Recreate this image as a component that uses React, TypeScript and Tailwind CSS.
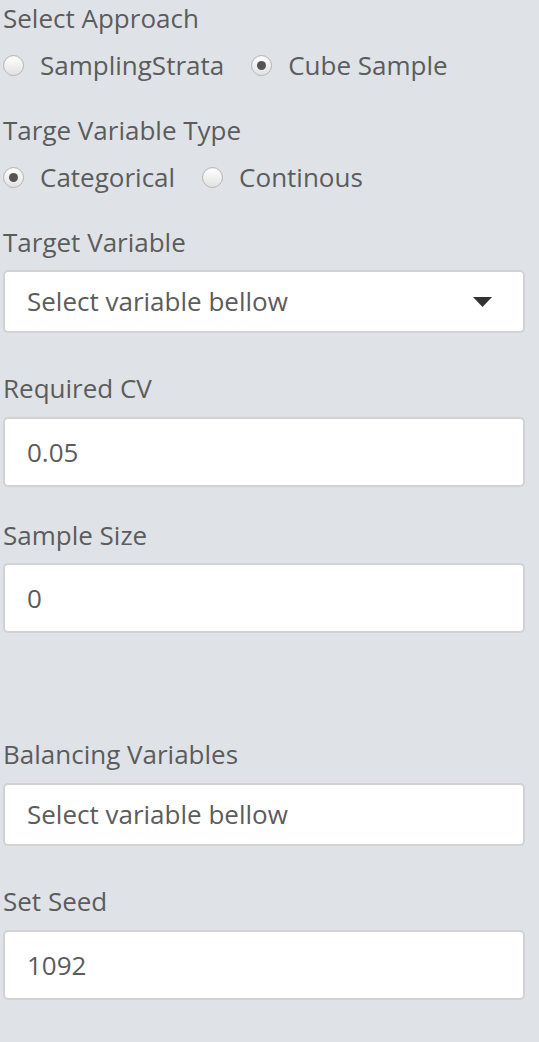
import React from "react";

const font = { fontFamily: '"Open Sans", "Noto Sans", sans-serif' };

function Radio({ checked, label }: { checked?: boolean; label: string }) {
  return (
    <div className="flex items-center">
      <span className="relative w-[21px] h-[21px] rounded-full border border-[#b4b4b4] bg-gradient-to-b from-[#ffffff] to-[#e2e2e2] shadow-[inset_0_1px_1px_rgba(0,0,0,0.05)] flex items-center justify-center">
        {checked && <span className="w-[9px] h-[9px] rounded-full bg-[#555555]" />}
      </span>
      <span className="ml-[16px]">{label}</span>
    </div>
  );
}

function Label({ children, className = "" }: { children: React.ReactNode; className?: string }) {
  return <div className={"h-[34px] leading-[34px] " + className}>{children}</div>;
}

function Box({ children, h, caret }: { children: React.ReactNode; h: string; caret?: boolean }) {
  return (
    <div className={"bg-white border-2 border-[#d2d2d2] rounded-[5px] flex items-center pl-[22px] pr-[31px] justify-between " + h}>
      <span>{children}</span>
      {caret && (
        <svg width="19" height="10" viewBox="0 0 19 10">
          <path d="M0 0 L19 0 L9.5 10 Z" fill="#333333" />
        </svg>
      )}
    </div>
  );
}

export default function App() {
  return (
    <div className="min-h-[1042px] bg-[#dfe3e8] text-[#5c5c5c] text-[26px] pl-[3px] pr-[14px] pt-[1px]" style={font}>
      <Label>Select Approach</Label>
      <div className="mt-[13px] h-[34px] flex items-center gap-[27px]">
        <Radio label="SamplingStrata" />
        <Radio checked label="Cube Sample" />
      </div>
      <Label className="mt-[31px]">Targe Variable Type</Label>
      <div className="mt-[13px] h-[34px] flex items-center gap-[27px]">
        <Radio checked label="Categorical" />
        <Radio label="Continous" />
      </div>
      <Label className="mt-[31px]">Target Variable</Label>
      <div className="mt-[11px]">
        <Box h="h-[63px]" caret>Select variable bellow</Box>
      </div>
      <Label className="mt-[38px]">Required CV</Label>
      <div className="mt-[12px]">
        <Box h="h-[70px]">0.05</Box>
      </div>
      <Label className="mt-[31px]">Sample Size</Label>
      <div className="mt-[11px]">
        <Box h="h-[70px]">0</Box>
      </div>
      <Label className="mt-[104px]">Balancing Variables</Label>
      <div className="mt-[12px]">
        <Box h="h-[63px]">Select variable bellow</Box>
      </div>
      <Label className="mt-[38px]">Set Seed</Label>
      <div className="mt-[12px]">
        <Box h="h-[70px]">1092</Box>
      </div>
    </div>
  );
}
